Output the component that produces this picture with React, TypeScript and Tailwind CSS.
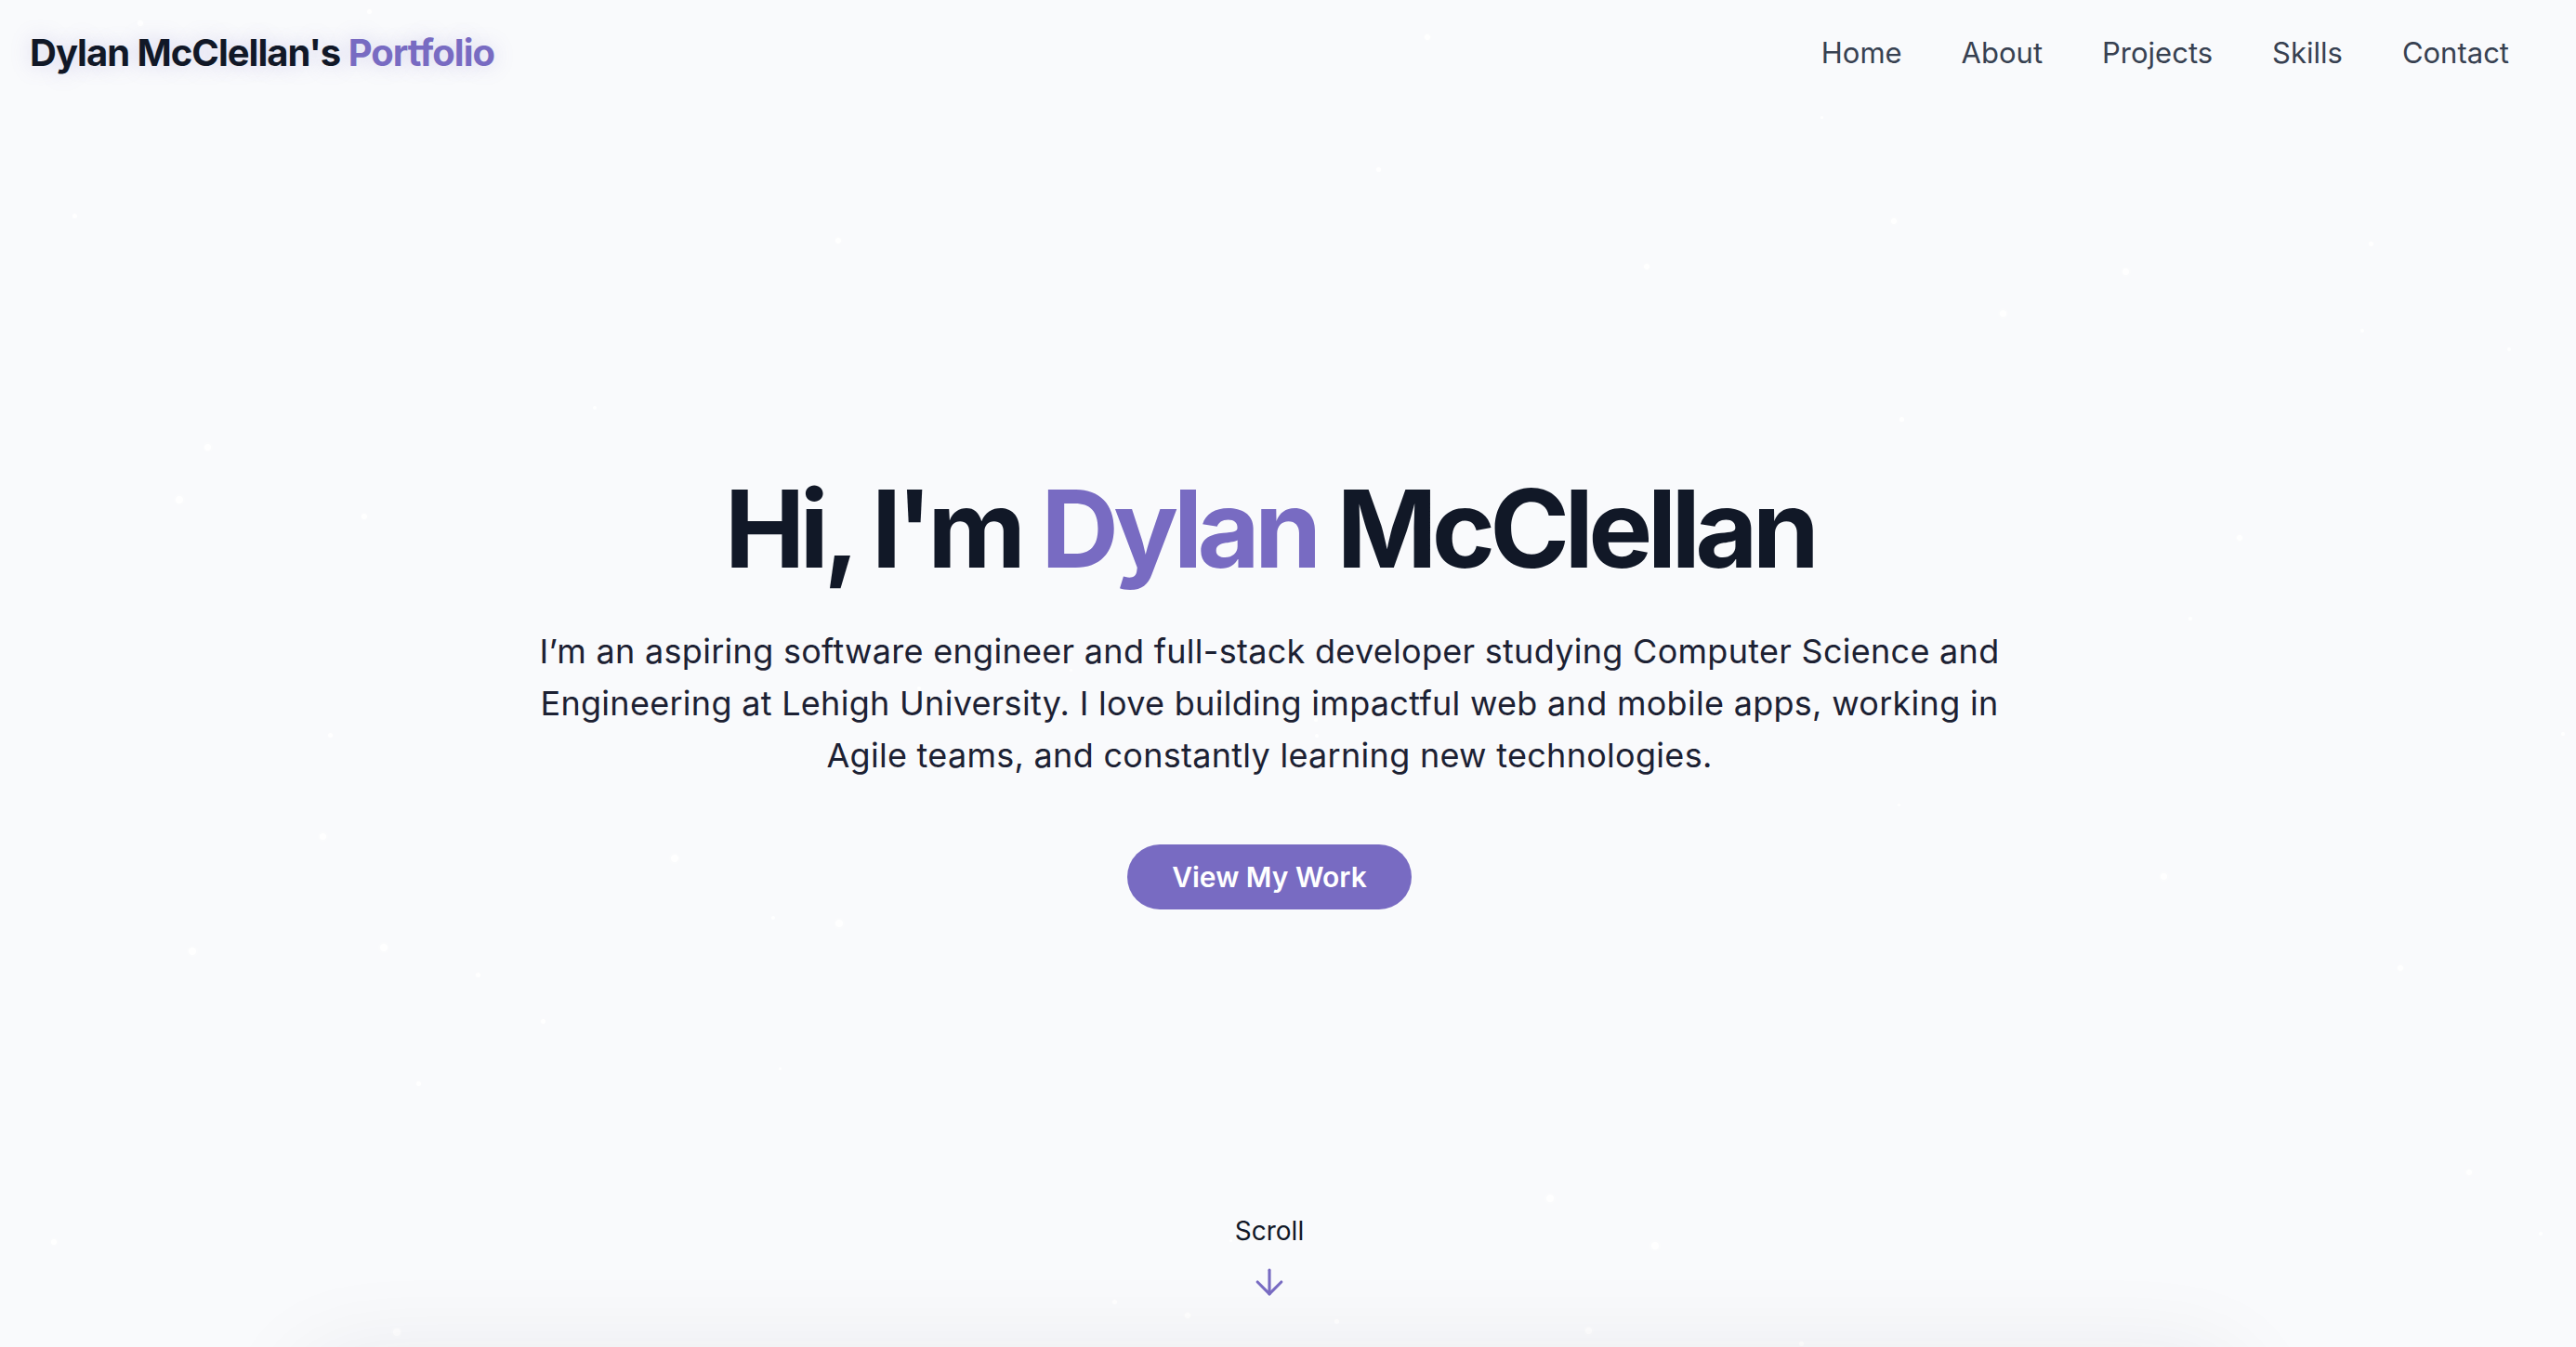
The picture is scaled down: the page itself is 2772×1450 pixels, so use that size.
import React from "react";

function mulberry32(a: number) {
  return function () {
    let t = (a += 0x6d2b79f5);
    t = Math.imul(t ^ (t >>> 15), t | 1);
    t ^= t + Math.imul(t ^ (t >>> 7), t | 61);
    return ((t ^ (t >>> 14)) >>> 0) / 4294967296;
  };
}

const fixedStars = [
  { x: 148, y: 22, s: 6 },
  { x: 395, y: 10, s: 5 },
  { x: 344, y: 897, s: 7 },
  { x: 409, y: 1016, s: 8 },
  { x: 512, y: 1047, s: 5 },
  { x: 423, y: 1430, s: 8 },
  { x: 1481, y: 180, s: 5 },
  { x: 78, y: 230, s: 5 },
  { x: 2549, y: 260, s: 5 },
  { x: 389, y: 553, s: 6 },
];

const rand = mulberry32(1234);
const stars = [
  ...fixedStars,
  ...Array.from({ length: 46 }, () => ({
    x: Math.round(rand() * 2772),
    y: Math.round(rand() * 1450),
    s: 3 + Math.round(rand() * 5),
  })),
];

function ArrowDown() {
  return (
    <svg
      width="44"
      height="44"
      viewBox="0 0 24 24"
      fill="none"
      stroke="#786bc2"
      strokeWidth="1.7"
      strokeLinecap="round"
      strokeLinejoin="round"
    >
      <path d="M12 5v14" />
      <path d="m19 12-7 7-7-7" />
    </svg>
  );
}

export default function App() {
  const navItems = ["Home", "About", "Projects", "Skills", "Contact"];
  return (
    <div
      className="relative w-full h-[1450px] overflow-hidden bg-[#f9fafc] text-[#111827]"
      style={{ fontFamily: "Inter, 'Noto Sans', sans-serif" }}
    >
      {/* stars */}
      {stars.map((st, i) => (
        <span
          key={i}
          className="absolute rounded-full bg-white shadow-[0_0_6px_rgba(255,255,255,0.9)]"
          style={{ left: st.x, top: st.y, width: st.s, height: st.s }}
        />
      ))}

      {/* shadow of next section */}
      <div className="absolute left-[330px] top-[1468px] w-[2072px] h-[400px] rounded-[32px] bg-[#f9fafc] shadow-[0_0_110px_rgba(30,35,60,0.09)]" />

      <div className="relative w-[2732px] h-full flex flex-col">
        <header className="h-[114px] px-8 flex items-center justify-between">
          <div className="text-[40px] leading-[56px] font-bold tracking-tight [text-shadow:0_0_22px_rgba(120,107,194,0.28)]">
            <span className="text-[#111827]">Dylan McClellan's </span>
            <span className="text-[#786bc2]">Portfolio</span>
          </div>
          <nav className="flex items-center gap-[64px] text-[31px] leading-[44px] text-[#374151]">
            {navItems.map((n) => (
              <a key={n} href="#" className="block">
                {n}
              </a>
            ))}
          </nav>
        </header>

        <main className="flex flex-col items-center pt-[397px]">
          <h1 className="text-[116px] leading-[116px] font-bold tracking-[-0.049em] text-[#111827]">
            Hi, I'm <span className="text-[#786bc2]">Dylan</span> McClellan
          </h1>
          <p className="mt-[46px] max-w-[1620px] text-center text-[36px] leading-[56px] tracking-[0.008em] text-[#1c2133]">
            I’m an aspiring software engineer and full-stack developer studying Computer Science and
            Engineering at Lehigh University. I love building impactful web and mobile apps, working in
            Agile teams, and constantly learning new technologies.
          </p>
          <button className="mt-[68px] h-[70px] px-12 rounded-full bg-[#786bc2] text-white text-[30px] leading-[48px] font-semibold">
            View My Work
          </button>
        </main>

        <div className="mt-auto mb-[48px] flex flex-col items-center">
          <span className="text-[28px] leading-[40px] text-[#111827]">Scroll</span>
          <div className="mt-[13px]">
            <ArrowDown />
          </div>
        </div>
      </div>
    </div>
  );
}
